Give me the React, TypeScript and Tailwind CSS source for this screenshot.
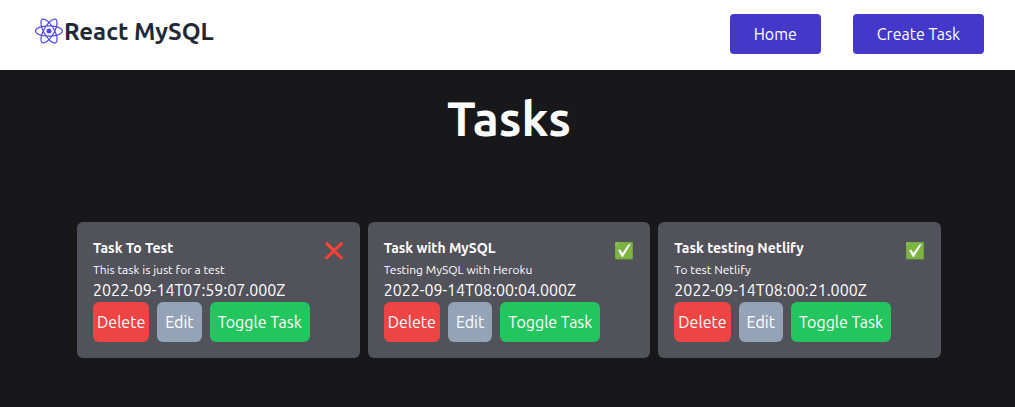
import { useState } from "react";
import { IoLogoReact } from "react-icons/io5";

interface Task {
  id: number;
  title: string;
  description: string;
  createdAt: string;
  done: boolean;
}

const initialTasks: Task[] = [
  { id: 1, title: "Task To Test", description: "This task is just for a test", createdAt: "2022-09-14T07:59:07.000Z", done: false },
  { id: 2, title: "Task with MySQL", description: "Testing MySQL with Heroku", createdAt: "2022-09-14T08:00:04.000Z", done: true },
  { id: 3, title: "Task testing Netlify", description: "To test Netlify", createdAt: "2022-09-14T08:00:21.000Z", done: true },
];

function StatusIcon({ done }: { done: boolean }) {
  return done ? (
    <svg viewBox="0 0 18 18" className="size-[18px]" role="img" aria-label="Done">
      <rect width="18" height="17.5" rx="1" fill="#689f38" />
      <rect x="0.3" y="0.3" width="17" height="16.4" rx="1" fill="#7cb342" />
      <path d="M1 3.2V1.6Q1 1 1.8 1H3" fill="none" stroke="#aed581" strokeWidth="0.8" strokeLinecap="round" />
      <path d="M3.2 8.6 4.8 7.6Q5.3 7.5 5.6 8L7.4 11.3 13.2 2.8Q13.6 2.3 14.2 2.3H15.6L8 14.7Q7.3 15.5 6.6 14.6Z" fill="#fff" />
    </svg>
  ) : (
    <svg viewBox="0 0 18 18" className="size-[18px]" role="img" aria-label="Not done">
      <path d="M1.6 1.6 16.4 15.9M16.4 1.6 1.6 15.9" stroke="#f44336" strokeWidth="3.2" strokeLinecap="round" />
      <path d="M2.2 1.4 8.8 7.7" stroke="#ff6b5e" strokeWidth="0.6" strokeLinecap="round" />
    </svg>
  );
}

interface TaskCardProps {
  task: Task;
  onDelete: () => void;
  onToggle: () => void;
}

function TaskCard({ task, onDelete, onToggle }: TaskCardProps) {
  return (
    <article className="rounded-md bg-[#52525b] p-4 text-white">
      <header className="flex h-6 justify-between">
        <h2 className="text-sm font-bold">{task.title}</h2>
        <span className="flex items-end pr-px pb-0.5">
          <StatusIcon done={task.done} />
        </span>
      </header>
      <p className="text-xs">{task.description}</p>
      <time dateTime={task.createdAt} className="block">{task.createdAt}</time>
      <div className="flex gap-2 whitespace-nowrap">
        <button type="button" onClick={onDelete} className="rounded-md bg-[#ef4444] px-1 py-2">Delete</button>
        <button type="button" className="rounded-md bg-[#94a3b8] p-2">Edit</button>
        <button type="button" onClick={onToggle} className="rounded-md bg-[#22c55e] p-2">Toggle Task</button>
      </div>
    </article>
  );
}

export default function App() {
  const [tasks, setTasks] = useState(initialTasks);

  const remove = (id: number) => setTasks(tasks.filter((t) => t.id !== id));
  const toggle = (id: number) => setTasks(tasks.map((t) => (t.id === id ? { ...t, done: !t.done } : t)));

  return (
    <div className="min-h-screen bg-[#18181b] font-['Ubuntu','Noto_Sans',sans-serif]">
      <nav className="flex items-start justify-between bg-white pt-3.5 pr-[31px] pb-4 pl-[34px]">
        <a href="#home" className="flex h-9 items-center text-2xl font-bold text-[#1f2937]">
          <IoLogoReact className="mb-0.5 size-[30px] text-[#4f46e5]" aria-hidden="true" />
          React MySQL
        </a>
        <ul className="flex gap-8 text-white">
          <li>
            <a href="#home" className="block rounded bg-[#4338ca] px-6 py-2">Home</a>
          </li>
          <li>
            <a href="#new" className="block rounded bg-[#4338ca] px-6 py-2">Create Task</a>
          </li>
        </ul>
      </nav>
      <main className="pt-6 pr-[74px] pl-[77px]">
        <h1 className="text-center text-5xl font-bold text-white">Tasks</h1>
        <section className="mt-20 grid grid-cols-3 gap-2">
          {tasks.map((task) => (
            <TaskCard key={task.id} task={task} onDelete={() => remove(task.id)} onToggle={() => toggle(task.id)} />
          ))}
        </section>
      </main>
    </div>
  );
}
